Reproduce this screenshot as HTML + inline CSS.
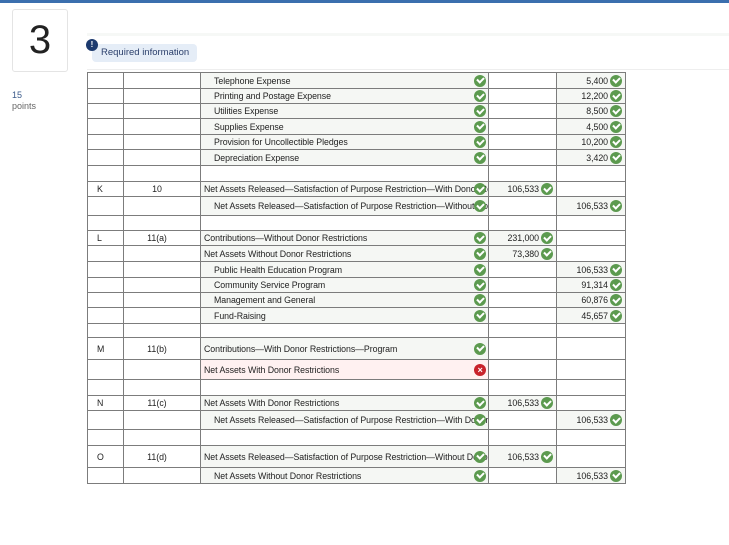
<!DOCTYPE html>
<html><head><meta charset="utf-8"><style>
*{box-sizing:border-box;margin:0;padding:0}
body{width:729px;height:545px;background:#fff;font-family:"Liberation Sans",Arial,sans-serif;position:relative;overflow:hidden;color:#222}
.bar{position:absolute;left:0;top:0;width:729px;height:3px;background:#3b6fae}
.qbox{position:absolute;left:12px;top:9px;width:56px;height:63px;border:1px solid #e4e4e4;border-radius:3px;font-size:40px;text-align:center;line-height:60px;color:#222}
.pts{position:absolute;left:12px;top:90px;font-size:9px;color:#3a5a8a;line-height:11px}
.pts span{color:#666}
.ghost{position:absolute;left:87px;top:33px;width:642px;height:3px;background:#f6f8f6}
.hdrline{position:absolute;left:87px;top:69px;width:642px;height:1px;background:#eee}
.req{position:absolute;left:92px;top:44px;width:105px;height:18px;background:#e5edf7;border-radius:4px;font-size:9.5px;color:#2b3f6b;line-height:18px;padding-left:9px}
.badge{position:absolute;left:86px;top:39px;width:12px;height:12px;border-radius:50%;background:#1c3a6e;color:#fff;font-size:8px;font-weight:bold;text-align:center;line-height:12px}
table{position:absolute;left:87px;top:72px;width:538px;border-collapse:collapse;table-layout:fixed;font-size:8.8px;letter-spacing:-0.05px}
td{border:1px solid #7c7c7c;padding:0;white-space:nowrap;overflow:hidden;position:relative;vertical-align:middle}
td.a{padding-left:9px}
td.b{text-align:center;padding-right:10px}
td.d{padding-left:3px;padding-right:0;background:#f5f7f4}
td.d.i{padding-left:13px}
td.d.e{background:#fff1f1}
td.n{text-align:right;padding-right:17px}
td.n.v{background:#f5f7f4}
.ck{position:absolute;right:3px;top:50%;margin-top:-6px;width:12px;height:12px;border-radius:50%;background:#5c9a4f}
.ck::after{content:"";position:absolute;left:3px;top:2.5px;width:5px;height:3px;border-left:2px solid #fff;border-bottom:2px solid #fff;transform:rotate(-45deg)}
.x{position:absolute;right:3px;top:50%;margin-top:-6px;width:12px;height:12px;border-radius:50%;background:#c8232c;color:#fff;font-size:9px;font-weight:bold;line-height:12px;text-align:center}
td.d .ck,td.d .x{right:2px}
</style></head><body>
<div class="bar"></div>
<div class="qbox">3</div>
<div class="pts">15<br><span>points</span></div>
<div class="ghost"></div>
<div class="hdrline"></div>
<div class="req">Required information</div>
<div class="badge">!</div>
<table>
<colgroup><col style="width:36px"><col style="width:77px"><col style="width:288px"><col style="width:68px"><col style="width:69px"></colgroup>
<tr style="height:16px"><td></td><td></td><td class="d i">Telephone Expense<i class="ck"></i></td><td></td><td class="n v">5,400<i class="ck"></i></td></tr>
<tr style="height:15px"><td></td><td></td><td class="d i">Printing and Postage Expense<i class="ck"></i></td><td></td><td class="n v">12,200<i class="ck"></i></td></tr>
<tr style="height:15px"><td></td><td></td><td class="d i">Utilities Expense<i class="ck"></i></td><td></td><td class="n v">8,500<i class="ck"></i></td></tr>
<tr style="height:16px"><td></td><td></td><td class="d i">Supplies Expense<i class="ck"></i></td><td></td><td class="n v">4,500<i class="ck"></i></td></tr>
<tr style="height:15px"><td></td><td></td><td class="d i">Provision for Uncollectible Pledges<i class="ck"></i></td><td></td><td class="n v">10,200<i class="ck"></i></td></tr>
<tr style="height:16px"><td></td><td></td><td class="d i">Depreciation Expense<i class="ck"></i></td><td></td><td class="n v">3,420<i class="ck"></i></td></tr>
<tr style="height:16px"><td></td><td></td><td></td><td></td><td></td></tr>
<tr style="height:15px"><td class="a">K</td><td class="b">10</td><td class="d">Net Assets Released—Satisfaction of Purpose Restriction—With Donor Restrictions<i class="ck"></i></td><td class="n v">106,533<i class="ck"></i></td><td></td></tr>
<tr style="height:19px"><td></td><td></td><td class="d i">Net Assets Released—Satisfaction of Purpose Restriction—Without Donor Restrictions<i class="ck"></i></td><td></td><td class="n v">106,533<i class="ck"></i></td></tr>
<tr style="height:15px"><td></td><td></td><td></td><td></td><td></td></tr>
<tr style="height:15px"><td class="a">L</td><td class="b">11(a)</td><td class="d">Contributions—Without Donor Restrictions<i class="ck"></i></td><td class="n v">231,000<i class="ck"></i></td><td></td></tr>
<tr style="height:16px"><td></td><td></td><td class="d">Net Assets Without Donor Restrictions<i class="ck"></i></td><td class="n v">73,380<i class="ck"></i></td><td></td></tr>
<tr style="height:16px"><td></td><td></td><td class="d i">Public Health Education Program<i class="ck"></i></td><td></td><td class="n v">106,533<i class="ck"></i></td></tr>
<tr style="height:15px"><td></td><td></td><td class="d i">Community Service Program<i class="ck"></i></td><td></td><td class="n v">91,314<i class="ck"></i></td></tr>
<tr style="height:15px"><td></td><td></td><td class="d i">Management and General<i class="ck"></i></td><td></td><td class="n v">60,876<i class="ck"></i></td></tr>
<tr style="height:16px"><td></td><td></td><td class="d i">Fund-Raising<i class="ck"></i></td><td></td><td class="n v">45,657<i class="ck"></i></td></tr>
<tr style="height:14px"><td></td><td></td><td></td><td></td><td></td></tr>
<tr style="height:22px"><td class="a">M</td><td class="b">11(b)</td><td class="d">Contributions—With Donor Restrictions—Program<i class="ck"></i></td><td></td><td></td></tr>
<tr style="height:20px"><td></td><td></td><td class="d e">Net Assets With Donor Restrictions<i class="x">×</i></td><td></td><td></td></tr>
<tr style="height:16px"><td></td><td></td><td></td><td></td><td></td></tr>
<tr style="height:15px"><td class="a">N</td><td class="b">11(c)</td><td class="d">Net Assets With Donor Restrictions<i class="ck"></i></td><td class="n v">106,533<i class="ck"></i></td><td></td></tr>
<tr style="height:19px"><td></td><td></td><td class="d i">Net Assets Released—Satisfaction of Purpose Restriction—With Donor Restrictions<i class="ck"></i></td><td></td><td class="n v">106,533<i class="ck"></i></td></tr>
<tr style="height:16px"><td></td><td></td><td></td><td></td><td></td></tr>
<tr style="height:22px"><td class="a">O</td><td class="b">11(d)</td><td class="d">Net Assets Released—Satisfaction of Purpose Restriction—Without Donor Restrictions<i class="ck"></i></td><td class="n v">106,533<i class="ck"></i></td><td></td></tr>
<tr style="height:16px"><td></td><td></td><td class="d i">Net Assets Without Donor Restrictions<i class="ck"></i></td><td></td><td class="n v">106,533<i class="ck"></i></td></tr>
</table>
</body></html>
